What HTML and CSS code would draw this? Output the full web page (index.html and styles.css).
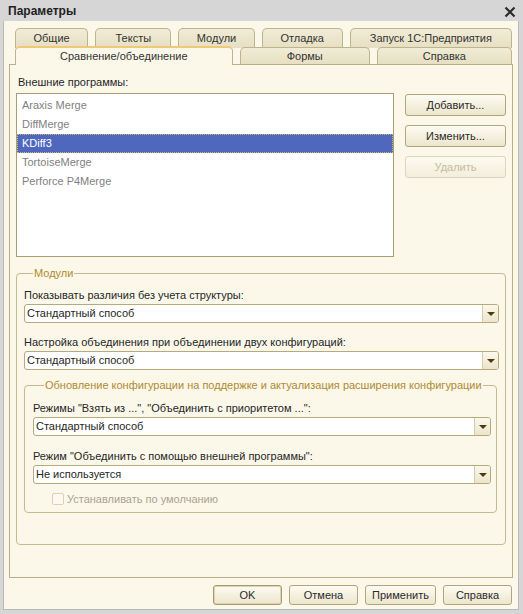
FILE: index.html
```html
<!DOCTYPE html>
<html lang="ru">
<head>
<meta charset="utf-8">
<title>Параметры</title>
<link rel="stylesheet" href="styles.css">
</head>
<body>
<div class="window">
  <div class="titlebar">
    <span class="title">Параметры</span>
    <svg class="close" width="12" height="12" viewBox="0 0 12 12"><path d="M1.5 1.5 L10.5 10.5 M10.5 1.5 L1.5 10.5" stroke="#2a2a2a" stroke-width="2.2" fill="none"/></svg>
  </div>
  <div class="client">
    <div class="tabs">
      <div class="tabrow row1">
        <div class="tab w-obsh">Общие</div>
        <div class="tab w-text">Тексты</div>
        <div class="tab w-mod">Модули</div>
        <div class="tab w-otl">Отладка</div>
        <div class="tab w-zap">Запуск 1С:Предприятия</div>
      </div>
      <div class="tabrow row2">
        <div class="tab active w-cmp">Сравнение/объединение</div>
        <div class="tab w-form">Формы</div>
        <div class="tab w-help">Справка</div>
      </div>
    </div>
    <div class="panel">
      <div class="label ext-label">Внешние программы:</div>
      <div class="ext-row">
        <div class="listbox">
          <div class="item">Araxis Merge</div>
          <div class="item">DiffMerge</div>
          <div class="item selected">KDiff3</div>
          <div class="item">TortoiseMerge</div>
          <div class="item">Perforce P4Merge</div>
        </div>
        <div class="side-buttons">
          <div class="btn">Добавить...</div>
          <div class="btn">Изменить...</div>
          <div class="btn disabled">Удалить</div>
        </div>
      </div>
      <fieldset class="group outer">
        <legend>Модули</legend>
        <div class="label">Показывать различия без учета структуры:</div>
        <div class="combo"><span class="value">Стандартный способ</span><span class="drop"></span></div>
        <div class="label">Настройка объединения при объединении двух конфигураций:</div>
        <div class="combo before-group"><span class="value">Стандартный способ</span><span class="drop"></span></div>
        <fieldset class="group inner">
          <legend>Обновление конфигурации на поддержке и актуализация расширения конфигурации</legend>
          <div class="label">Режимы "Взять из ...", "Объединить с приоритетом ...":</div>
          <div class="combo"><span class="value">Стандартный способ</span><span class="drop"></span></div>
          <div class="label">Режим "Объединить с помощью внешней программы":</div>
          <div class="combo before-check"><span class="value">Не используется</span><span class="drop"></span></div>
          <div class="check"><span class="box"></span><span>Устанавливать по умолчанию</span></div>
        </fieldset>
      </fieldset>
    </div>
    <div class="footer">
      <div class="btn default w-ok">OK</div>
      <div class="btn w-cancel">Отмена</div>
      <div class="btn w-apply">Применить</div>
      <div class="btn w-help2">Справка</div>
    </div>
  </div>
</div>
</body>
</html>
```
FILE: styles.css
```css
* { box-sizing: border-box; }
html, body { margin: 0; padding: 0; }
body {
  width: 523px;
  height: 614px;
  background: #d4d4d4;
  font-family: "Liberation Sans", Arial, sans-serif;
  font-size: 11px;
  color: #262626;
}
.window {
  width: 523px;
  height: 614px;
  background: #d6d6d6;
  padding: 0 4px 4px 3px;
  display: flex;
  flex-direction: column;
}
.titlebar {
  height: 21px;
  display: flex;
  align-items: center;
  justify-content: space-between;
  padding: 1px 3px 0 5px;
}
.title { font-weight: bold; font-size: 12px; color: #1e1e1e; }
.close { display: block; margin-top: 1px; }
.client {
  flex: 1;
  background: #fbf8ea;
  border-left: 1px solid #b9b9b9;
  border-right: 1px solid #b9b9b9;
  border-bottom: 1px solid #b9b9b9;
  display: flex;
  flex-direction: column;
  padding: 7px 5px 0 5px;
}
.tabs { padding: 0 1px 0 6px; position: relative; z-index: 1; }
.tabrow { display: flex; gap: 7px; }
.tab {
  border: 1px solid #bdb38d;
  border-bottom: none;
  border-radius: 5px 5px 0 0;
  background: linear-gradient(#f1ecd6, #e6dfc3);
  text-align: center;
  color: #333;
  line-height: 16px;
  white-space: nowrap;
}
.row1 .tab { height: 20px; padding-top: 1px; }
.row1 { margin-bottom: -2px; }
.row2 .tab { height: 17px; margin-top: 1px; }
.row2 .tab.active {
  height: 19px;
  margin-top: 0;
  margin-bottom: -1px;
  background: #fbf8ea;
  border-top: 2px solid #f0c878;
  line-height: 15px;
  padding-top: 1px;
}
.w-obsh { width: 74px; }
.w-text { width: 77px; }
.w-mod { width: 77px; }
.w-otl { width: 82px; }
.w-zap { width: 164px; }
.w-cmp { width: 219px; }
.w-form { width: 131px; }
.w-help { width: 136px; }

.panel {
  height: 514px;
  border: 1px solid #b9ae87;
  padding: 10px 6px 0 6px;
  display: flex;
  flex-direction: column;
}
.label { line-height: 14px; white-space: nowrap; }
.ext-label { padding-left: 2px; }
.ext-row { display: flex; gap: 11px; margin-top: 4px; }
.listbox {
  width: 380px;
  height: 164px;
  background: #fff;
  border: 1px solid #a99d72;
  padding-top: 2px;
}
.item {
  height: 19px;
  line-height: 19px;
  padding-left: 5px;
  color: #7f7f7f;
}
.item.selected {
  background: #5067be;
  color: #fff;
  outline: 1px dotted #c8b870;
  outline-offset: -1px;
}
.side-buttons { display: flex; flex-direction: column; gap: 9px; padding-top: 1px; }
.btn {
  width: 101px;
  height: 22px;
  border: 1px solid #b0a57c;
  border-radius: 3px;
  background: linear-gradient(#fdfbf3, #ece6cc);
  text-align: center;
  line-height: 20px;
  color: #2b2b2b;
  white-space: nowrap;
}
.btn.disabled {
  border-color: #ddd6bd;
  background: linear-gradient(#fcfaf1, #f3eedc);
  color: #c8bb9c;
}

.group {
  margin: 0;
  border: 1px solid #c4b991;
  border-radius: 4px;
  min-width: 0;
}
.group legend {
  color: #b08a30;
  line-height: 14px;
  padding: 0 1px;
  white-space: nowrap;
}
.outer {
  margin-top: 9px;
  padding: 8px 6px 31px 7px;
}
.outer > legend { margin-left: 9px; }
.inner {
  margin: 0 2px 0 0;
  padding: 9px 5px 6px 8px;
}
.inner > legend { margin-left: 11px; }
.combo {
  margin-top: 2px;
  margin-bottom: 12px;
  height: 19px;
  border: 1px solid #b6a97c;
  border-radius: 3px;
  background: #fff;
  display: flex;
}
.combo.before-group { margin-bottom: 8px; }
.inner .combo { margin-bottom: 13px; }
.inner .combo.before-check { margin-bottom: 8px; }
.combo .value { flex: 1; line-height: 17px; padding-left: 2px; }
.combo .drop {
  width: 16px;
  border-left: 1px solid #d6ccaa;
  background: linear-gradient(#fbf8ec, #ece5ca);
  border-radius: 0 2px 2px 0;
  display: flex;
  align-items: center;
  justify-content: center;
}
.combo .drop::before {
  content: "";
  border-left: 4px solid transparent;
  border-right: 4px solid transparent;
  border-top: 4px solid #4a3a12;
  margin-top: 1px;
}
.check {
  display: flex;
  align-items: center;
  gap: 3px;
  padding-left: 19px;
  color: #a9a292;
  line-height: 14px;
}
.check .box {
  width: 12px;
  height: 12px;
  border: 1px solid #d9d1b6;
  border-radius: 2px;
  background: #fbf9f0;
}
.footer {
  display: flex;
  justify-content: flex-end;
  gap: 7px;
  padding: 7px 1px 0 0;
}
.footer .btn { height: 20px; line-height: 18px; }
.footer .btn.default { border-color: #a79b6e; box-shadow: inset 0 0 0 1px #ddd3ae; }
.w-ok { width: 69px !important; }
.w-cancel { width: 69px !important; }
.w-apply { width: 71px !important; }
.w-help2 { width: 69px !important; }
```
